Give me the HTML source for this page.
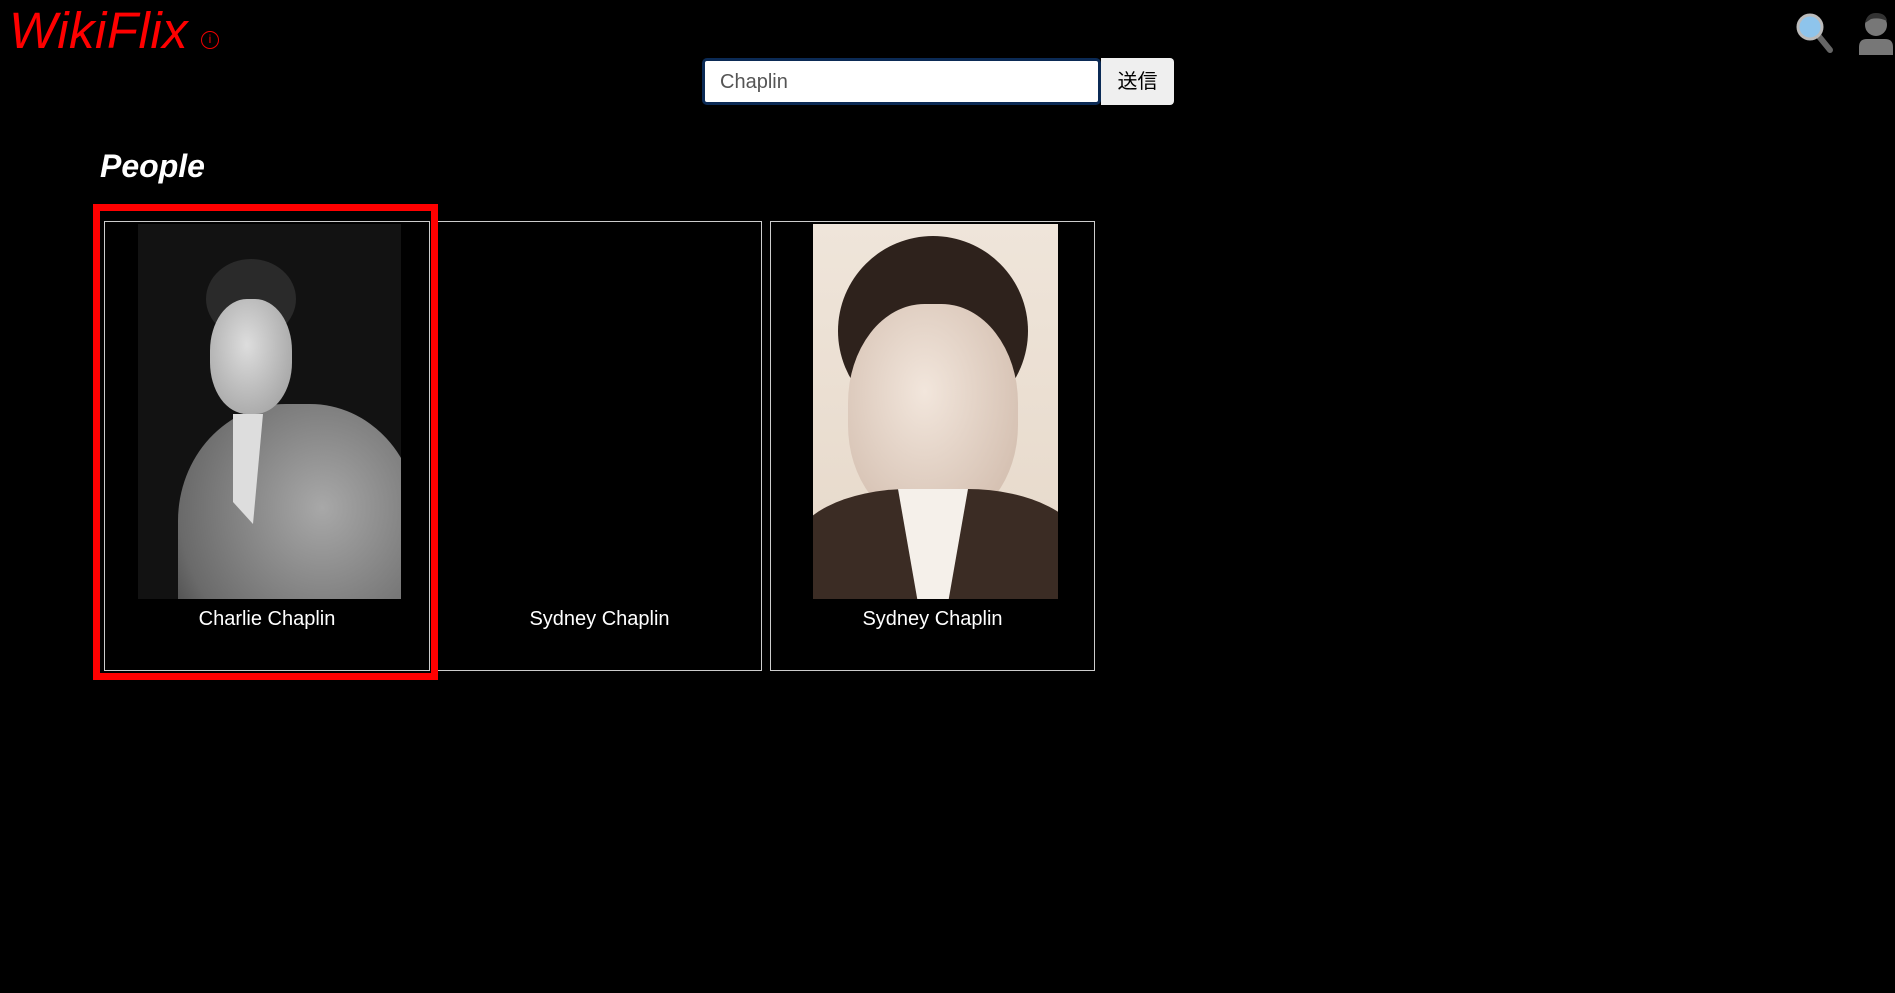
<!DOCTYPE html>
<html><head><meta charset="utf-8"><style>
*{margin:0;padding:0;box-sizing:border-box}
body{width:1895px;height:993px;background:#000;position:relative;overflow:hidden;font-family:"Liberation Sans","Noto Sans CJK JP",sans-serif;color:#fff}
.logo{position:absolute;left:9px;top:3px;font-size:51px;font-style:italic;color:#f00;letter-spacing:0.5px;line-height:56px}
.info{position:absolute;left:201px;top:31px;width:18px;height:18px;border:1.5px solid #e00;border-radius:50%;color:#e00;font-size:12px;text-align:center;line-height:15px}
.inp{position:absolute;left:702px;top:58px;width:399px;height:47px;background:#fff;border:3px solid #0b2a55;border-radius:5px;color:#555;font-size:20px;padding-left:15px;line-height:43px}
.btn{position:absolute;left:1101px;top:58px;width:73px;height:47px;background:#efefef;border-radius:0 4px 4px 0;color:#000;font-size:20px;text-align:center;line-height:49px}
h2{position:absolute;left:100px;top:148px;font-size:32px;font-style:italic;font-weight:bold}
.card{position:absolute;top:221px;height:450px;border:1px solid #ccc}
.name{position:absolute;left:0;right:0;top:386px;text-align:center;font-size:20px}
.red{position:absolute;left:93px;top:204px;width:345px;height:476px;border:7px solid #f00}
.img{position:absolute;top:2px;height:375px;overflow:hidden}
.img div{position:absolute}
</style></head><body>
<div class="logo">WikiFlix</div>
<div class="info">i</div>
<svg style="position:absolute;left:1795px;top:12px" width="44" height="44" viewBox="0 0 44 44">
<line x1="22" y1="22" x2="35" y2="38" stroke="#666" stroke-width="6" stroke-linecap="round"/>
<circle cx="15" cy="15" r="12" fill="#8ec4ec" stroke="#bbb" stroke-width="3"/>
</svg>
<svg style="position:absolute;left:1857px;top:11px" width="38" height="44" viewBox="0 0 38 44">
<circle cx="19" cy="14" r="11" fill="#777"/>
<path d="M8 12 Q10 2 19 2 Q29 2 30 10 Q22 6 14 8 Z" fill="#333"/>
<path d="M2 44 V36 Q2 28 10 28 H28 Q36 28 36 36 V44 Z" fill="#777"/>
</svg>
<div class="inp">Chaplin</div>
<div class="btn">送信</div>
<h2>People</h2>
<div class="card" style="left:104px;width:326px">
<div class="img" style="left:33px;width:263px;background:#121212">
<div style="left:40px;top:180px;width:240px;height:260px;border-radius:45% 45% 0 0;background:radial-gradient(ellipse at 60% 40%,#a8a8a8,#6a6a6a 70%,#333)"></div>
<div style="left:68px;top:35px;width:90px;height:80px;border-radius:50%;background:#2a2a2a"></div>
<div style="left:72px;top:75px;width:82px;height:115px;border-radius:45%;background:radial-gradient(ellipse at 45% 40%,#ddd,#999)"></div>
<div style="left:85px;top:190px;width:50px;height:110px;background:#ddd;clip-path:polygon(20% 0,80% 0,60% 100%,20% 80%)"></div>
</div>
<div class="name">Charlie Chaplin</div></div>
<div class="card" style="left:437px;width:325px"><div class="name">Sydney Chaplin</div></div>
<div class="card" style="left:770px;width:325px">
<div class="img" style="left:42px;width:245px;background:linear-gradient(#efe5da,#e6d8c9)">
<div style="left:25px;top:12px;width:190px;height:190px;border-radius:50%;background:#2e221c"></div>
<div style="left:35px;top:80px;width:170px;height:220px;border-radius:45%;background:radial-gradient(ellipse at 45% 40%,#f2e6dc,#cdb6a6)"></div>
<div style="left:-20px;top:265px;width:290px;height:150px;border-radius:40% 40% 0 0;background:#3b2c24"></div>
<div style="left:85px;top:265px;width:70px;height:120px;background:#f5f0ea;clip-path:polygon(0 0,100% 0,70% 100%,30% 100%)"></div>
</div>
<div class="name">Sydney Chaplin</div></div>
<div class="red"></div>
</body></html>
